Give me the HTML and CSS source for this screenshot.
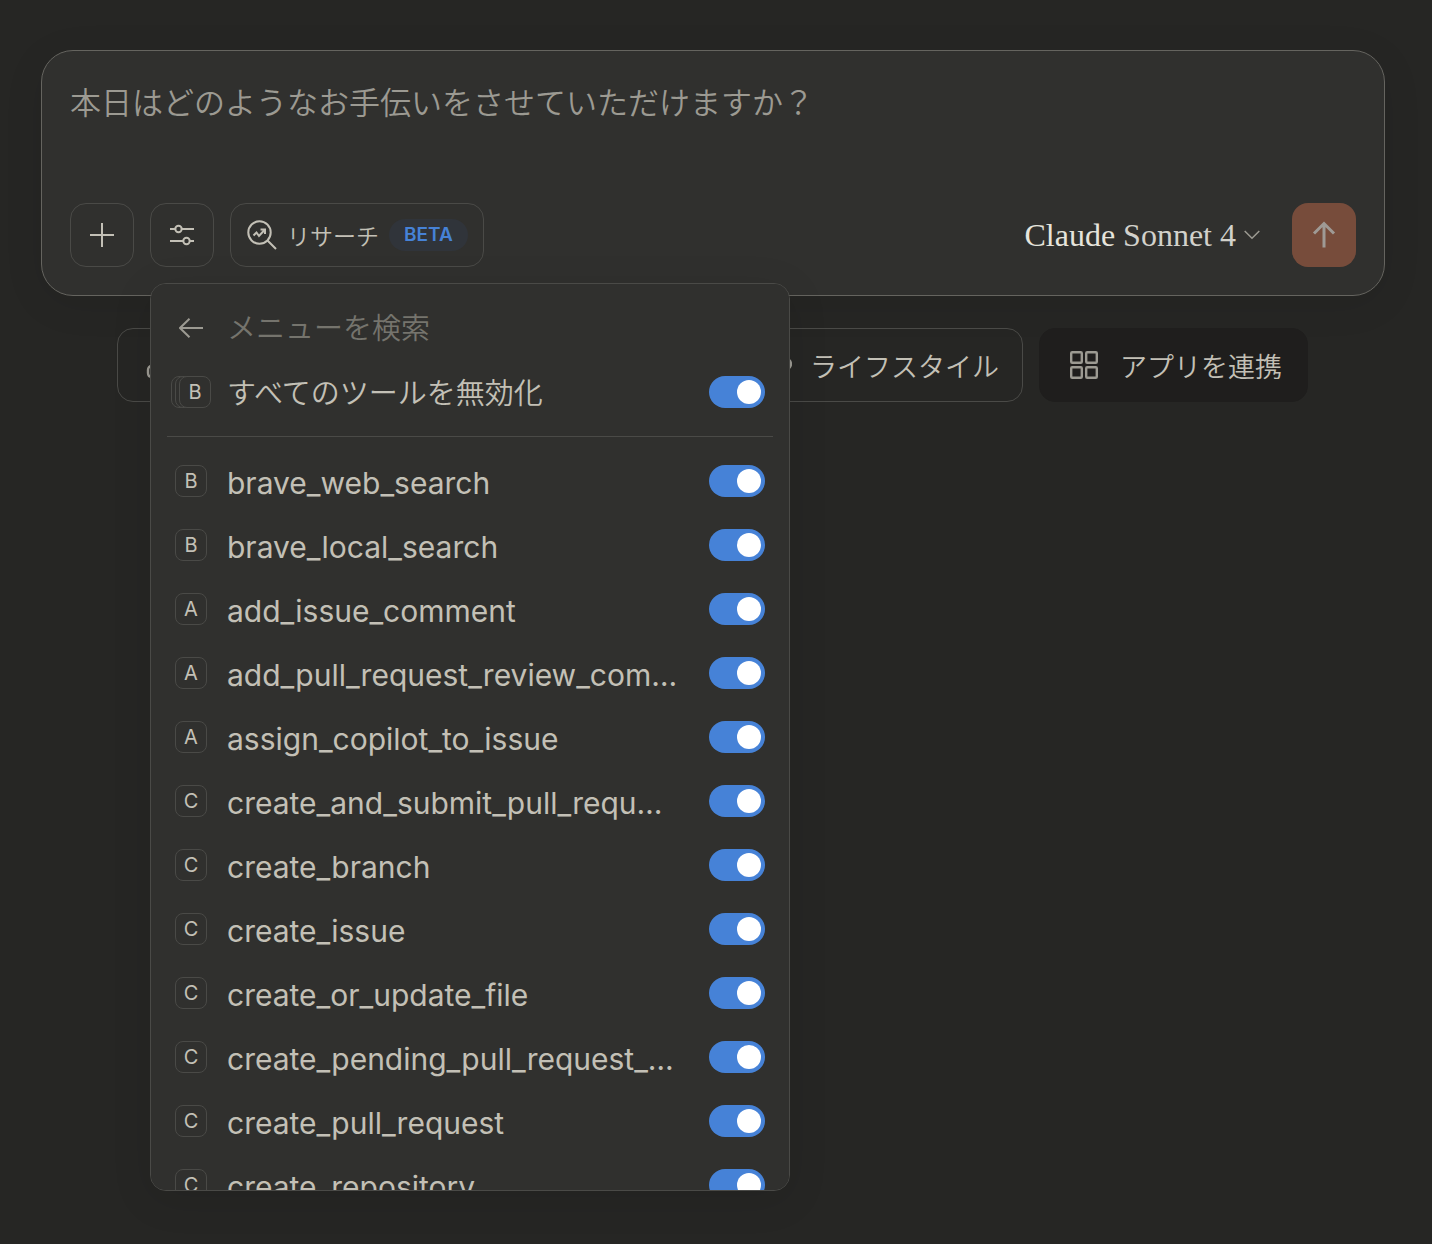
FILE: index.html
```html
<!DOCTYPE html>
<html lang="ja">
<head>
<meta charset="utf-8">
<meta name="viewport" content="width=device-width, initial-scale=1">
<title>Claude</title>
<link rel="stylesheet" href="styles.css">
</head>
<body>
<main class="page">
  <form class="composer">
    <textarea class="prompt" rows="1" aria-label="メッセージ" placeholder="本日はどのようなお手伝いをさせていただけますか？"></textarea>
    <div class="toolbar">
      <button class="tool" type="button" aria-label="追加">
        <svg width="24" height="24" viewBox="0 0 24 24"><path d="M12 0v24M0 12h24"/></svg>
      </button>
      <div class="menu-anchor">
        <button class="tool" type="button" aria-label="ツール" aria-expanded="true">
          <svg width="24" height="24" viewBox="0 0 24 24"><path d="M0 6h5M12 6h12M0 18h13M20 18h4"/><circle cx="8.500" cy="6" r="3.200"/><circle cx="16.500" cy="18" r="3.200"/></svg>
        </button>
        <div class="menu">
          <div class="row">
            <button class="back" type="button" aria-label="戻る">
              <svg width="24" height="20" viewBox="0 0 24 20"><path d="M24 10H1M10.500 .700 1 10l9.500 9.300"/></svg>
            </button>
            <input class="search" type="text" aria-label="メニューを検索" placeholder="メニューを検索">
          </div>
          <label class="row">
            <span class="stack"><span class="badge"></span><span class="badge"></span><span class="badge">B</span></span>
            <span class="name name-ja">すべてのツールを無効化</span>
            <input class="switch" type="checkbox" role="switch" checked>
          </label>
          <hr class="divider">
          <label class="row"><span class="badge">B</span><span class="name">brave_web_search</span><input class="switch" type="checkbox" role="switch" checked></label>
          <label class="row"><span class="badge">B</span><span class="name">brave_local_search</span><input class="switch" type="checkbox" role="switch" checked></label>
          <label class="row"><span class="badge">A</span><span class="name">add_issue_comment</span><input class="switch" type="checkbox" role="switch" checked></label>
          <label class="row"><span class="badge">A</span><span class="name">add_pull_request_review_com…</span><input class="switch" type="checkbox" role="switch" checked></label>
          <label class="row"><span class="badge">A</span><span class="name">assign_copilot_to_issue</span><input class="switch" type="checkbox" role="switch" checked></label>
          <label class="row"><span class="badge">C</span><span class="name">create_and_submit_pull_requ…</span><input class="switch" type="checkbox" role="switch" checked></label>
          <label class="row"><span class="badge">C</span><span class="name">create_branch</span><input class="switch" type="checkbox" role="switch" checked></label>
          <label class="row"><span class="badge">C</span><span class="name">create_issue</span><input class="switch" type="checkbox" role="switch" checked></label>
          <label class="row"><span class="badge">C</span><span class="name">create_or_update_file</span><input class="switch" type="checkbox" role="switch" checked></label>
          <label class="row"><span class="badge">C</span><span class="name">create_pending_pull_request_…</span><input class="switch" type="checkbox" role="switch" checked></label>
          <label class="row"><span class="badge">C</span><span class="name">create_pull_request</span><input class="switch" type="checkbox" role="switch" checked></label>
          <label class="row"><span class="badge">C</span><span class="name">create_repository</span><input class="switch" type="checkbox" role="switch" checked></label>
        </div>
      </div>
      <button class="tool research" type="button">
        <svg width="30" height="30" viewBox="0 0 30 30"><circle cx="12.500" cy="12.500" r="11.200"/><path d="m20.500 20.500 8.500 8.500M6.500 15.500l3-3 2.500 3.500 5.500-6M13.500 9.500h4.500v4.500"/></svg>
        <span>リサーチ</span>
        <span class="beta">BETA</span>
      </button>
      <button class="model" type="button">
        <span><span class="brand">Claude</span> Sonnet 4</span>
        <svg width="16" height="10" viewBox="0 0 16 10"><path d="m.700 1 7.300 7.300L15.300 1"/></svg>
      </button>
      <button class="send" type="submit" aria-label="送信">
        <svg width="24" height="28" viewBox="0 0 24 28"><path d="M12 26.500V3M2 12.500 12 2.500l10 10"/></svg>
      </button>
    </div>
  </form>
  <nav class="chips">
    <button class="chip chip-write" type="button" aria-label="文章作成">
      <svg width="28" height="28" viewBox="0 0 28 28"><path d="M9 15H6q-4 0-4 4v3q0 4 4 4h18"/></svg>
    </button>
    <button class="chip chip-life" type="button">
      <svg width="28" height="28" viewBox="0 0 28 28"><path d="M2 6h20v12a6 6 0 0 1-6 6H8a6 6 0 0 1-6-6zM21 8h1a4.500 4.500 0 0 1 0 10h-1"/></svg>
      <span>ライフスタイル</span>
    </button>
    <button class="chip chip-apps" type="button">
      <svg width="28" height="28" viewBox="0 0 28 28"><rect x="1.200" y="1.200" width="10.600" height="10.600" rx="1"/><rect x="16.200" y="1.200" width="10.600" height="10.600" rx="1"/><rect x="1.200" y="16.200" width="10.600" height="10.600" rx="1"/><rect x="16.200" y="16.200" width="10.600" height="10.600" rx="1"/></svg>
      <span>アプリを連携</span>
    </button>
  </nav>
</main>
</body>
</html>
```
FILE: styles.css
```css
:root {
  --bg: #262624;
  --surface: #30302e;
  --line: #4a4a47;
  --text: #c3c0b6;
  --muted: #9c9a92;
  --faint: #75746d;
  --blue: #4682d7;
}

* { box-sizing: border-box; }

body {
  margin: 0;
  background: var(--bg);
  color: var(--text);
  font-family: Inter, "Noto Sans CJK JP", sans-serif;
}

button, input, textarea {
  margin: 0;
  padding: 0;
  border: 0;
  background: none;
  color: inherit;
  font: inherit;
}

svg {
  flex: none;
  fill: none;
  stroke: currentColor;
  stroke-width: 2;
}

.page {
  min-height: 100vh;
  padding: 50px 47px 50px 41px;
}

.composer {
  display: flex;
  flex-direction: column;
  gap: 52px;
  padding: 28px;
  border: 1px solid #65645f;
  border-radius: 32px;
  background: var(--surface);
  box-shadow: 0 8px 40px rgba(0, 0, 0, .08);
}

.prompt {
  display: block;
  width: 100%;
  height: 72px;
  padding: 0;
  font-family: "Noto Sans CJK JP", sans-serif;
  font-size: 31px;
  font-weight: 350;
  line-height: 44px;
  resize: none;
  outline: 0;
}

.prompt::placeholder { color: var(--muted); opacity: 1; }

.toolbar {
  display: flex;
  align-items: center;
  gap: 16px;
}

.tool {
  display: flex;
  align-items: center;
  justify-content: center;
  width: 64px;
  height: 64px;
  border: 1px solid var(--line);
  border-radius: 16px;
}

.research {
  gap: 10px;
  width: auto;
  padding: 0 15px 0 16px;
  font-size: 23px;
  font-weight: 350;
}

.beta {
  padding: 0 15px;
  border-radius: 16px;
  background: #30343a;
  color: var(--blue);
  font-size: 19px;
  font-weight: 600;
  line-height: 32px;
}

.model {
  display: flex;
  align-items: center;
  gap: 8px;
  margin-left: auto;
  margin-right: 16px;
  color: #d2d1cb;
  font-family: "Liberation Serif", serif;
  font-size: 32px;
  line-height: 40px;
}

.model svg { color: var(--muted); stroke-width: 1.5; }

.brand { color: #e6e4dc; }

.send {
  display: flex;
  align-items: center;
  justify-content: center;
  width: 64px;
  height: 64px;
  border-radius: 16px;
  background: #774c3b;
  color: #9f9a95;
}

.send svg { stroke-width: 3; }

.menu-anchor { position: relative; }

.menu {
  position: absolute;
  z-index: 1;
  top: calc(100% + 16px);
  left: 0;
  width: 640px;
  max-height: calc(100vh - 336px);
  padding: 12px 16px;
  overflow: auto;
  scrollbar-width: none;
  border: 1px solid var(--line);
  border-radius: 16px;
  background: var(--surface);
  box-shadow: 0 8px 40px rgba(0, 0, 0, .1);
}

.row {
  display: flex;
  align-items: center;
  gap: 20px;
  height: 64px;
  padding: 0 8px;
}

.back {
  display: flex;
  align-items: center;
  justify-content: center;
  width: 32px;
  height: 32px;
  color: var(--muted);
}

.search {
  flex: 1;
  min-width: 0;
  font-size: 29px;
  font-weight: 350;
  outline: 0;
}

.search::placeholder { color: var(--faint); opacity: 1; }

.badge {
  flex: none;
  width: 32px;
  height: 32px;
  border: 1px solid var(--line);
  border-radius: 8px;
  background: var(--surface);
  font-size: 20px;
  line-height: 30px;
  text-align: center;
}

.stack {
  display: flex;
  margin: 0 -4px;
}

.stack .badge + .badge { margin-left: -28px; }

.name {
  flex: 1;
  min-width: 0;
  padding-top: 4px;
  overflow: hidden;
  font-size: 30px;
  line-height: 40px;
  text-overflow: ellipsis;
  white-space: nowrap;
}

.name-ja {
  font-size: 29px;
  font-weight: 350;
}

.switch {
  display: flex;
  align-items: center;
  justify-content: flex-end;
  flex: none;
  appearance: none;
  width: 56px;
  height: 32px;
  padding: 4px;
  border-radius: 16px;
  background: var(--line);
}

.switch::before {
  width: 24px;
  height: 24px;
  border-radius: 50%;
  background: #fff;
  content: "";
}

.switch:checked { background: var(--blue); }
.switch:not(:checked) { justify-content: flex-start; }

.divider {
  height: 1px;
  margin: 12px 0;
  border: 0;
  background: var(--line);
}

.chips {
  display: flex;
  gap: 16px;
  margin-top: 32px;
  padding: 0 77px 0 76px;
}

.chip {
  display: flex;
  align-items: center;
  height: 74px;
  border: 1px solid var(--line);
  border-radius: 16px;
  font-size: 27px;
  font-weight: 350;
}

.chip svg { color: var(--muted); stroke-width: 2.4; }

.chip-write {
  width: 160px;
  margin-right: auto;
  padding: 0 28px;
}

.chip-life {
  gap: 18px;
  padding: 0 23px 0 30px;
}

.chip-apps {
  gap: 22px;
  padding: 0 25px 0 30px;
  border-color: #1f1e1d;
  background: #1f1e1d;
}
```
